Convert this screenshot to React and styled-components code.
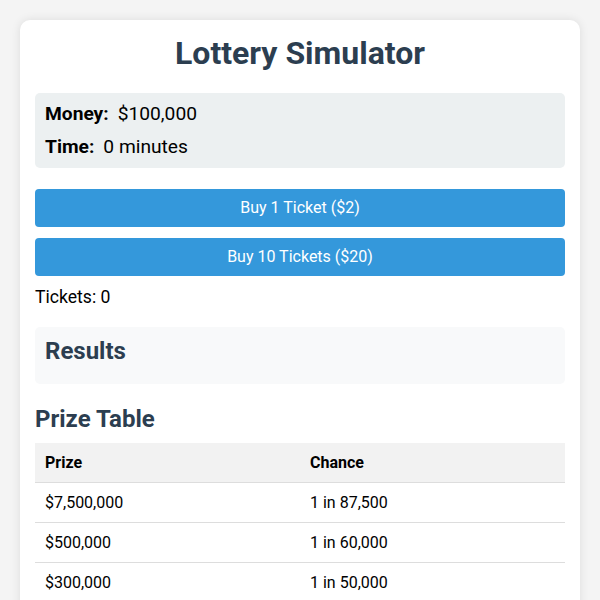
import React from 'react'
import styled, { createGlobalStyle } from "styled-components"

const GlobalStyle = createGlobalStyle`
  body {
    margin: 0;
    padding: 20px;
    background: #f4f4f4;
    font-family: Roboto, "Liberation Sans", Arial, sans-serif;
    color: #000;
  }
`

const Card = styled.div`
  background: #fff;
  border-radius: 10px;
  box-shadow: 0 0 10px rgba(0, 0, 0, 0.1);
  padding: 15px;
  min-height: 700px;
`

const Title = styled.h1`
  margin: 0 0 21px;
  font-size: 32px;
  line-height: 37px;
  text-align: center;
  color: #2c3e50;
`

const Stats = styled.div`
  display: flex;
  flex-direction: column;
  gap: 11px;
  background: #ecf0f1;
  border-radius: 5px;
  padding: 10px;
  font-size: 19.2px;
  line-height: 22px;
`

const Label = styled.strong`
  margin-right: 9px;
`

const Button = styled.button`
  display: block;
  width: 100%;
  margin-top: ${props => (props.first ? "21px" : "11px")};
  padding: 10px;
  border: none;
  border-radius: 4px;
  background: #3498db;
  color: #fff;
  font-family: inherit;
  font-size: 16px;
  line-height: 18px;
  cursor: pointer;
`

const TicketCount = styled.div`
  margin-top: 11px;
  font-size: 17.6px;
  line-height: 20px;
`

const Results = styled.div`
  margin-top: 20px;
  background: #f8f9fa;
  border-radius: 5px;
  padding: 10px 10px 19px;
`

const Heading = styled.h2`
  margin: 0;
  font-size: 24px;
  line-height: 28px;
  color: #2c3e50;
`

const PrizeHeading = styled(Heading)`
  margin: 21px 0 10px;
`

const Table = styled.table`
  width: 100%;
  border-collapse: collapse;
  font-size: 16px;
`

const Th = styled.th`
  width: 50%;
  text-align: left;
  padding: 10px;
  background: #f2f2f2;
  border-bottom: 1px solid #ddd;
  line-height: 19px;
`

const Td = styled.td`
  padding: 10px;
  border-bottom: 1px solid #ddd;
  line-height: 19px;
`

const prizes = [
  ["$7,500,000", "1 in 87,500"],
  ["$500,000", "1 in 60,000"],
  ["$300,000", "1 in 50,000"],
  ["$100,000", "1 in 25,000"],
]

export default function App() {
  return (
    <>
      <GlobalStyle />
      <Card>
        <Title>Lottery Simulator</Title>
        <Stats>
          <div><Label>Money:</Label>$100,000</div>
          <div><Label>Time:</Label>0 minutes</div>
        </Stats>
        <Button first>Buy 1 Ticket ($2)</Button>
        <Button>Buy 10 Tickets ($20)</Button>
        <TicketCount>Tickets: 0</TicketCount>
        <Results>
          <Heading>Results</Heading>
        </Results>
        <PrizeHeading>Prize Table</PrizeHeading>
        <Table>
          <thead>
            <tr><Th>Prize</Th><Th>Chance</Th></tr>
          </thead>
          <tbody>
            {prizes.map(([prize, chance]) => (
              <tr key={prize}><Td>{prize}</Td><Td>{chance}</Td></tr>
            ))}
          </tbody>
        </Table>
      </Card>
    </>
  )
}
